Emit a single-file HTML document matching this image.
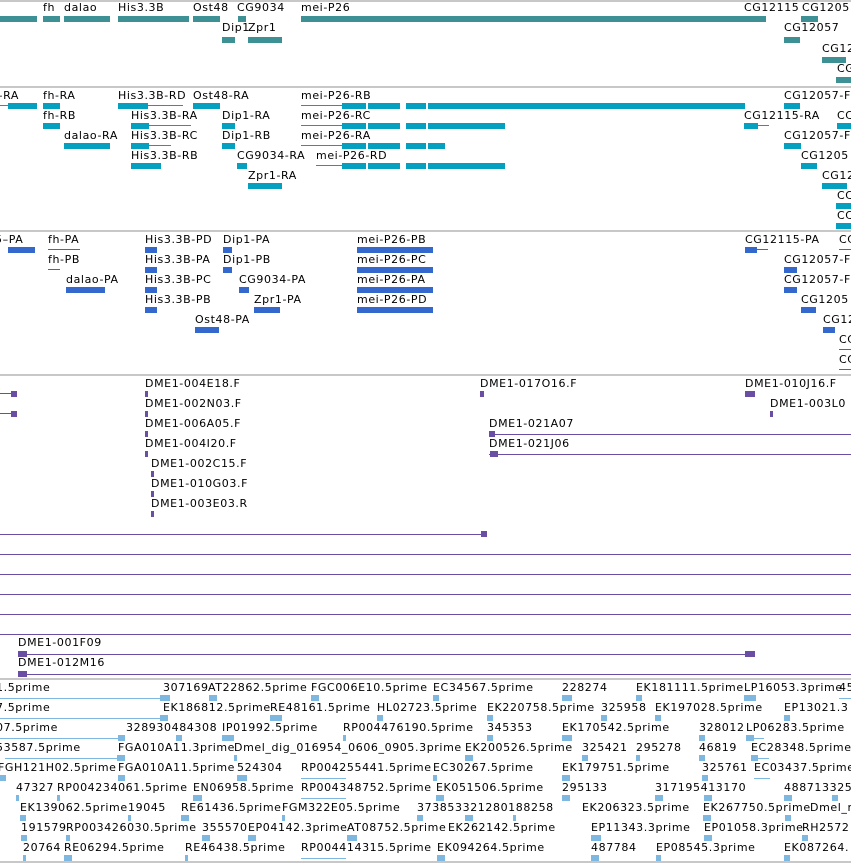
<!DOCTYPE html>
<html><head><meta charset="utf-8"><style>
html,body{margin:0;padding:0;background:#fff;width:851px;height:863px;overflow:hidden}
body{position:relative}
i{position:absolute;font-style:normal;font:11px/12px "DejaVu Sans","Liberation Sans",sans-serif;letter-spacing:.6px;color:#000;white-space:nowrap}
b{position:absolute;height:6px;display:block}
.g{background:#3d9094}.r{background:#05a0c0}.p{background:#3468cc}.c{background:#6a4ea3}.e{background:#7eb7e0}
.l{height:1px!important}
.s{position:absolute;left:0;width:851px;height:2px;background:#c8c8c8}
</style></head><body>
<div class="s" style="top:0"></div>
<div class="s" style="top:86px"></div>
<div class="s" style="top:230px"></div>
<div class="s" style="top:374px"></div>
<div class="s" style="top:678px"></div>
<div class="s" style="top:861px"></div>

<!-- genes -->
<i style="left:43px;top:2px">fh</i><i style="left:64px;top:2px">dalao</i><i style="left:118px;top:2px">His3.3B</i><i style="left:193px;top:2px">Ost48</i><i style="left:237px;top:2px">CG9034</i><i style="left:301px;top:2px">mei-P26</i><i style="left:744px;top:2px">CG12115</i><i style="left:802px;top:2px">CG1205</i>
<b class="g" style="left:0;top:16px;width:37px"></b><b class="g" style="left:43px;top:16px;width:17px"></b><b class="g" style="left:64px;top:16px;width:46px"></b><b class="g" style="left:118px;top:16px;width:71px"></b><b class="g" style="left:193px;top:16px;width:27px"></b><b class="g" style="left:238px;top:16px;width:8px"></b><b class="g" style="left:301px;top:16px;width:444px"></b><b class="g" style="left:745px;top:16px;width:21px"></b><b class="g" style="left:801px;top:16px;width:17px"></b>
<i style="left:222px;top:22px">Dip1</i><i style="left:248px;top:22px">Zpr1</i><i style="left:784px;top:22px">CG12057</i>
<b class="g" style="left:222px;top:37px;width:13px"></b><b class="g" style="left:248px;top:37px;width:34px"></b><b class="g" style="left:784px;top:37px;width:16px"></b>
<i style="left:822px;top:43px">CG12</i><b class="g" style="left:822px;top:57px;width:24px"></b>
<i style="left:837px;top:63px">CG</i><b class="g" style="left:836px;top:77px;width:15px"></b>

<!-- transcripts -->
<i style="left:-3px;top:90px">–RA</i><i style="left:43px;top:90px">fh-RA</i><i style="left:118px;top:90px">His3.3B-RD</i><i style="left:193px;top:90px">Ost48-RA</i><i style="left:301px;top:90px">mei-P26-RB</i><i style="left:784px;top:90px">CG12057-F</i>
<b class="r l" style="left:0;top:105px;width:10px"></b><b class="r" style="left:8px;top:103px;width:29px"></b><b class="r" style="left:43px;top:103px;width:17px"></b><b class="r" style="left:118px;top:103px;width:30px"></b><b class="r l" style="left:148px;top:105px;width:35px"></b><b class="r" style="left:193px;top:103px;width:27px"></b><b class="r l" style="left:301px;top:105px;width:41px"></b><b class="r" style="left:342px;top:103px;width:24px"></b><b class="r" style="left:368px;top:103px;width:32px"></b><b class="r" style="left:406px;top:103px;width:20px"></b><b class="r" style="left:428px;top:103px;width:317px"></b><b class="r" style="left:784px;top:103px;width:16px"></b>
<i style="left:43px;top:110px">fh-RB</i><i style="left:131px;top:110px">His3.3B-RA</i><i style="left:222px;top:110px">Dip1-RA</i><i style="left:301px;top:110px">mei-P26-RC</i><i style="left:744px;top:110px">CG12115-RA</i><i style="left:837px;top:110px">CC</i>
<b class="r" style="left:43px;top:123px;width:17px"></b><b class="r" style="left:131px;top:123px;width:18px"></b><b class="r l" style="left:149px;top:125px;width:42px"></b><b class="r" style="left:222px;top:123px;width:13px"></b><b class="r l" style="left:301px;top:125px;width:41px"></b><b class="r" style="left:342px;top:123px;width:24px"></b><b class="r" style="left:368px;top:123px;width:32px"></b><b class="r" style="left:406px;top:123px;width:20px"></b><b class="r" style="left:428px;top:123px;width:77px"></b><b class="r" style="left:744px;top:123px;width:14px"></b><b class="r l" style="left:758px;top:125px;width:11px"></b><b class="r" style="left:837px;top:123px;width:14px"></b>
<i style="left:64px;top:130px">dalao-RA</i><i style="left:131px;top:130px">His3.3B-RC</i><i style="left:222px;top:130px">Dip1-RB</i><i style="left:301px;top:130px">mei-P26-RA</i><i style="left:784px;top:130px">CG12057-F</i>
<b class="r" style="left:64px;top:143px;width:46px"></b><b class="r" style="left:131px;top:143px;width:18px"></b><b class="r l" style="left:149px;top:145px;width:22px"></b><b class="r" style="left:222px;top:143px;width:13px"></b><b class="r l" style="left:301px;top:145px;width:41px"></b><b class="r" style="left:342px;top:143px;width:24px"></b><b class="r" style="left:368px;top:143px;width:32px"></b><b class="r" style="left:406px;top:143px;width:20px"></b><b class="r" style="left:428px;top:143px;width:17px"></b><b class="r" style="left:784px;top:143px;width:17px"></b>
<i style="left:131px;top:150px">His3.3B-RB</i><i style="left:237px;top:150px">CG9034-RA</i><i style="left:316px;top:150px">mei-P26-RD</i><i style="left:801px;top:150px">CG1205</i>
<b class="r" style="left:131px;top:163px;width:30px"></b><b class="r" style="left:237px;top:163px;width:10px"></b><b class="r l" style="left:316px;top:165px;width:26px"></b><b class="r" style="left:342px;top:163px;width:24px"></b><b class="r" style="left:368px;top:163px;width:32px"></b><b class="r" style="left:406px;top:163px;width:20px"></b><b class="r" style="left:428px;top:163px;width:77px"></b><b class="r" style="left:801px;top:163px;width:16px"></b>
<i style="left:248px;top:170px">Zpr1-RA</i><i style="left:822px;top:170px">CG12</i>
<b class="r" style="left:248px;top:183px;width:34px"></b><b class="r" style="left:822px;top:183px;width:25px"></b>
<i style="left:837px;top:190px">CC</i><b class="r" style="left:836px;top:203px;width:15px"></b>
<i style="left:837px;top:210px">CC</i><b class="r" style="left:836px;top:223px;width:15px"></b>

<!-- proteins -->
<i style="left:-5px;top:234px">5–PA</i><i style="left:48px;top:234px">fh-PA</i><i style="left:145px;top:234px">His3.3B-PD</i><i style="left:223px;top:234px">Dip1-PA</i><i style="left:357px;top:234px">mei-P26-PB</i><i style="left:745px;top:234px">CG12115-PA</i><i style="left:839px;top:234px">CC</i>
<b class="p" style="left:8px;top:247px;width:27px"></b><b class="p l" style="left:48px;top:249px;width:32px"></b><b class="p" style="left:145px;top:247px;width:12px"></b><b class="p" style="left:223px;top:247px;width:9px"></b><b class="p" style="left:357px;top:247px;width:76px"></b><b class="p" style="left:745px;top:247px;width:12px"></b><b class="p l" style="left:757px;top:249px;width:11px"></b><b class="p l" style="left:839px;top:249px;width:12px"></b>
<i style="left:48px;top:254px">fh-PB</i><i style="left:145px;top:254px">His3.3B-PA</i><i style="left:223px;top:254px">Dip1-PB</i><i style="left:357px;top:254px">mei-P26-PC</i><i style="left:784px;top:254px">CG12057-F</i>
<b class="p l" style="left:48px;top:269px;width:12px"></b><b class="p" style="left:145px;top:267px;width:12px"></b><b class="p" style="left:223px;top:267px;width:9px"></b><b class="p" style="left:357px;top:267px;width:76px"></b><b class="p" style="left:784px;top:267px;width:13px"></b>
<i style="left:66px;top:274px">dalao-PA</i><i style="left:145px;top:274px">His3.3B-PC</i><i style="left:239px;top:274px">CG9034-PA</i><i style="left:357px;top:274px">mei-P26-PA</i><i style="left:784px;top:274px">CG12057-F</i>
<b class="p" style="left:66px;top:287px;width:39px"></b><b class="p" style="left:145px;top:287px;width:12px"></b><b class="p" style="left:239px;top:287px;width:10px"></b><b class="p" style="left:357px;top:287px;width:76px"></b><b class="p" style="left:784px;top:287px;width:13px"></b>
<i style="left:145px;top:294px">His3.3B-PB</i><i style="left:254px;top:294px">Zpr1-PA</i><i style="left:357px;top:294px">mei-P26-PD</i><i style="left:801px;top:294px">CG1205</i>
<b class="p" style="left:145px;top:307px;width:12px"></b><b class="p" style="left:254px;top:307px;width:26px"></b><b class="p" style="left:357px;top:307px;width:76px"></b><b class="p" style="left:801px;top:307px;width:15px"></b>
<i style="left:195px;top:314px">Ost48-PA</i><i style="left:823px;top:314px">CG12</i>
<b class="p" style="left:195px;top:327px;width:24px"></b><b class="p" style="left:823px;top:327px;width:12px"></b>
<i style="left:839px;top:334px">CC</i><b class="p l" style="left:839px;top:349px;width:12px"></b>
<i style="left:839px;top:354px">CC</i><b class="p l" style="left:839px;top:369px;width:12px"></b>

<!-- clones -->
<i style="left:145px;top:378px">DME1-004E18.F</i><i style="left:480px;top:378px">DME1-017O16.F</i><i style="left:745px;top:378px">DME1-010J16.F</i>
<b class="c l" style="left:0;top:393px;width:12px"></b><b class="c" style="left:11px;top:391px;width:6px"></b><b class="c" style="left:145px;top:391px;width:3px"></b><b class="c" style="left:480px;top:391px;width:4px"></b><b class="c" style="left:745px;top:391px;width:10px"></b>
<i style="left:145px;top:398px">DME1-002N03.F</i><i style="left:770px;top:398px">DME1-003L0</i>
<b class="c l" style="left:0;top:413px;width:12px"></b><b class="c" style="left:11px;top:411px;width:6px"></b><b class="c" style="left:145px;top:411px;width:3px"></b><b class="c" style="left:770px;top:411px;width:3px"></b>
<i style="left:145px;top:418px">DME1-006A05.F</i><i style="left:489px;top:418px">DME1-021A07</i>
<b class="c" style="left:145px;top:431px;width:3px"></b><b class="c l" style="left:489px;top:434px;width:362px"></b><b class="c" style="left:489px;top:431px;width:6px"></b>
<i style="left:145px;top:438px">DME1-004I20.F</i><i style="left:489px;top:438px">DME1-021J06</i>
<b class="c" style="left:145px;top:451px;width:3px"></b><b class="c l" style="left:489px;top:454px;width:362px"></b><b class="c" style="left:490px;top:451px;width:8px"></b>
<i style="left:151px;top:458px">DME1-002C15.F</i><b class="c" style="left:151px;top:471px;width:3px"></b>
<i style="left:151px;top:478px">DME1-010G03.F</i><b class="c" style="left:151px;top:491px;width:3px"></b>
<i style="left:151px;top:498px">DME1-003E03.R</i><b class="c" style="left:151px;top:511px;width:3px"></b>
<b class="c l" style="left:0;top:534px;width:487px"></b><b class="c" style="left:481px;top:531px;width:6px"></b>
<b class="c l" style="left:0;top:554px;width:851px"></b>
<b class="c l" style="left:0;top:574px;width:851px"></b>
<b class="c l" style="left:0;top:594px;width:851px"></b>
<b class="c l" style="left:0;top:614px;width:851px"></b>
<b class="c l" style="left:0;top:634px;width:851px"></b>
<i style="left:18px;top:637px">DME1-001F09</i><i style="left:18px;top:657px">DME1-012M16</i>
<b class="c l" style="left:18px;top:654px;width:737px"></b><b class="c" style="left:18px;top:651px;width:9px"></b><b class="c" style="left:745px;top:651px;width:10px"></b>
<b class="c l" style="left:18px;top:674px;width:833px"></b><b class="c" style="left:18px;top:671px;width:9px"></b>

<!-- ESTs -->
<i style="left:-4px;top:682px">1.5prime</i><i style="left:163px;top:682px">307169</i><i style="left:208px;top:682px">AT22862.5prime</i><i style="left:311px;top:682px">FGC006E10.5prime</i><i style="left:433px;top:682px">EC34567.5prime</i><i style="left:562px;top:682px">228274</i><i style="left:636px;top:682px">EK181111.5prime</i><i style="left:744px;top:682px">LP16053.3prime</i><i style="left:839px;top:682px">45</i>
<i style="left:-4px;top:702px">7.5prime</i><i style="left:163px;top:702px">EK186812.5prime</i><i style="left:270px;top:702px">RE48161.5prime</i><i style="left:377px;top:702px">HL02723.5prime</i><i style="left:487px;top:702px">EK220758.5prime</i><i style="left:601px;top:702px">325958</i><i style="left:655px;top:702px">EK197028.5prime</i><i style="left:784px;top:702px">EP13021.3</i>
<i style="left:-4px;top:722px">07.5prime</i><i style="left:126px;top:722px">328930484308</i><i style="left:222px;top:722px">IP01992.5prime</i><i style="left:343px;top:722px">RP004476190.5prime</i><i style="left:487px;top:722px">345353</i><i style="left:562px;top:722px">EK170542.5prime</i><i style="left:699px;top:722px">328012</i><i style="left:746px;top:722px">LP06283.5prime</i>
<i style="left:-4px;top:742px">53587.5prime</i><i style="left:118px;top:742px">FGA010A11.3prime</i><i style="left:234px;top:742px">Dmel_dig_016954_0606_0905.3prime</i><i style="left:465px;top:742px">EK200526.5prime</i><i style="left:582px;top:742px">325421</i><i style="left:636px;top:742px">295278</i><i style="left:699px;top:742px">46819</i><i style="left:751px;top:742px">EC28348.5prime</i>
<i style="left:-2px;top:762px">FGH121H02.5prime</i><i style="left:118px;top:762px">FGA010A11.5prime</i><i style="left:237px;top:762px">524304</i><i style="left:301px;top:762px">RP004255441.5prime</i><i style="left:433px;top:762px">EC30267.5prime</i><i style="left:562px;top:762px">EK179751.5prime</i><i style="left:702px;top:762px">325761</i><i style="left:754px;top:762px">EC03437.5prime</i>
<i style="left:16px;top:782px">47327</i><i style="left:57px;top:782px">RP004234061.5prime</i><i style="left:193px;top:782px">EN06958.5prime</i><i style="left:301px;top:782px">RP004348752.5prime</i><i style="left:436px;top:782px">EK051506.5prime</i><i style="left:562px;top:782px">295133</i><i style="left:655px;top:782px">317195413170</i><i style="left:784px;top:782px">488713325</i>
<i style="left:20px;top:802px">EK139062.5prime</i><i style="left:128px;top:802px">19045</i><i style="left:181px;top:802px">RE61436.5prime</i><i style="left:282px;top:802px">FGM322E05.5prime</i><i style="left:417px;top:802px">373853321280188258</i><i style="left:582px;top:802px">EK206323.5prime</i><i style="left:703px;top:802px">EK267750.5prime</i><i style="left:810px;top:802px">Dmel_n</i>
<i style="left:21px;top:822px">191579</i><i style="left:66px;top:822px">RP003426030.5prime</i><i style="left:202px;top:822px">355570</i><i style="left:248px;top:822px">EP04142.3prime</i><i style="left:347px;top:822px">AT08752.5prime</i><i style="left:448px;top:822px">EK262142.5prime</i><i style="left:591px;top:822px">EP11343.3prime</i><i style="left:704px;top:822px">EP01058.3prime</i><i style="left:802px;top:822px">RH2572</i>
<i style="left:23px;top:842px">20764</i><i style="left:64px;top:842px">RE06294.5prime</i><i style="left:185px;top:842px">RE46438.5prime</i><i style="left:301px;top:842px">RP004414315.5prime</i><i style="left:437px;top:842px">EK094264.5prime</i><i style="left:591px;top:842px">487784</i><i style="left:656px;top:842px">EP08545.3prime</i><i style="left:784px;top:842px">EK087264.</i>

<b class="e l" style="left:0;top:698px;width:165px"></b><b class="e" style="left:160px;top:695px;width:10px"></b><b class="e" style="left:209px;top:695px;width:8px"></b><b class="e" style="left:311px;top:695px;width:8px"></b><b class="e" style="left:433px;top:695px;width:6px"></b><b class="e" style="left:562px;top:695px;width:10px"></b><b class="e" style="left:636px;top:695px;width:6px"></b><b class="e" style="left:744px;top:695px;width:12px"></b><b class="e l" style="left:839px;top:698px;width:12px"></b>
<b class="e l" style="left:0;top:718px;width:165px"></b><b class="e" style="left:160px;top:715px;width:8px"></b><b class="e" style="left:270px;top:715px;width:12px"></b><b class="e" style="left:377px;top:715px;width:6px"></b><b class="e" style="left:487px;top:715px;width:6px"></b><b class="e" style="left:601px;top:715px;width:6px"></b><b class="e" style="left:655px;top:715px;width:6px"></b><b class="e" style="left:784px;top:715px;width:6px"></b>
<b class="e l" style="left:0;top:738px;width:125px"></b><b class="e" style="left:118px;top:735px;width:7px"></b><b class="e" style="left:176px;top:735px;width:6px"></b><b class="e" style="left:222px;top:735px;width:12px"></b><b class="e" style="left:343px;top:735px;width:3px"></b><b class="e" style="left:487px;top:735px;width:6px"></b><b class="e" style="left:562px;top:735px;width:10px"></b><b class="e" style="left:699px;top:735px;width:6px"></b><b class="e l" style="left:746px;top:738px;width:18px"></b><b class="e" style="left:746px;top:735px;width:8px"></b>
<b class="e l" style="left:5px;top:758px;width:120px"></b><b class="e" style="left:117px;top:755px;width:8px"></b><b class="e" style="left:234px;top:755px;width:3px"></b><b class="e" style="left:465px;top:755px;width:8px"></b><b class="e" style="left:582px;top:755px;width:6px"></b><b class="e" style="left:636px;top:755px;width:4px"></b><b class="e" style="left:699px;top:755px;width:6px"></b><b class="e l" style="left:751px;top:758px;width:18px"></b><b class="e" style="left:751px;top:755px;width:7px"></b>
<b class="e" style="left:0;top:775px;width:6px"></b><b class="e" style="left:118px;top:775px;width:7px"></b><b class="e" style="left:237px;top:775px;width:10px"></b><b class="e l" style="left:301px;top:778px;width:45px"></b><b class="e" style="left:433px;top:775px;width:4px"></b><b class="e" style="left:562px;top:775px;width:8px"></b><b class="e" style="left:702px;top:775px;width:6px"></b><b class="e l" style="left:754px;top:778px;width:16px"></b>
<b class="e" style="left:16px;top:795px;width:3px"></b><b class="e" style="left:57px;top:795px;width:3px"></b><b class="e" style="left:193px;top:795px;width:9px"></b><b class="e l" style="left:301px;top:798px;width:45px"></b><b class="e" style="left:436px;top:795px;width:8px"></b><b class="e" style="left:562px;top:795px;width:8px"></b><b class="e" style="left:655px;top:795px;width:8px"></b><b class="e" style="left:704px;top:795px;width:8px"></b><b class="e" style="left:784px;top:795px;width:8px"></b><b class="e" style="left:832px;top:795px;width:6px"></b>
<b class="e" style="left:20px;top:815px;width:6px"></b><b class="e" style="left:128px;top:815px;width:3px"></b><b class="e" style="left:181px;top:815px;width:8px"></b><b class="e" style="left:282px;top:815px;width:3px"></b><b class="e" style="left:417px;top:815px;width:6px"></b><b class="e" style="left:465px;top:815px;width:8px"></b><b class="e" style="left:513px;top:815px;width:3px"></b><b class="e" style="left:703px;top:815px;width:8px"></b><b class="e" style="left:785px;top:815px;width:6px"></b>
<b class="e" style="left:21px;top:835px;width:6px"></b><b class="e" style="left:66px;top:835px;width:4px"></b><b class="e" style="left:202px;top:835px;width:8px"></b><b class="e" style="left:248px;top:835px;width:8px"></b><b class="e" style="left:347px;top:835px;width:10px"></b><b class="e" style="left:591px;top:835px;width:10px"></b><b class="e" style="left:704px;top:835px;width:8px"></b><b class="e" style="left:802px;top:835px;width:6px"></b>
<b class="e" style="left:23px;top:855px;width:3px"></b><b class="e" style="left:64px;top:855px;width:8px"></b><b class="e" style="left:185px;top:855px;width:3px"></b><b class="e l" style="left:301px;top:858px;width:45px"></b><b class="e" style="left:437px;top:855px;width:8px"></b><b class="e" style="left:591px;top:855px;width:8px"></b><b class="e" style="left:656px;top:855px;width:5px"></b><b class="e" style="left:784px;top:855px;width:6px"></b>
</body></html>
